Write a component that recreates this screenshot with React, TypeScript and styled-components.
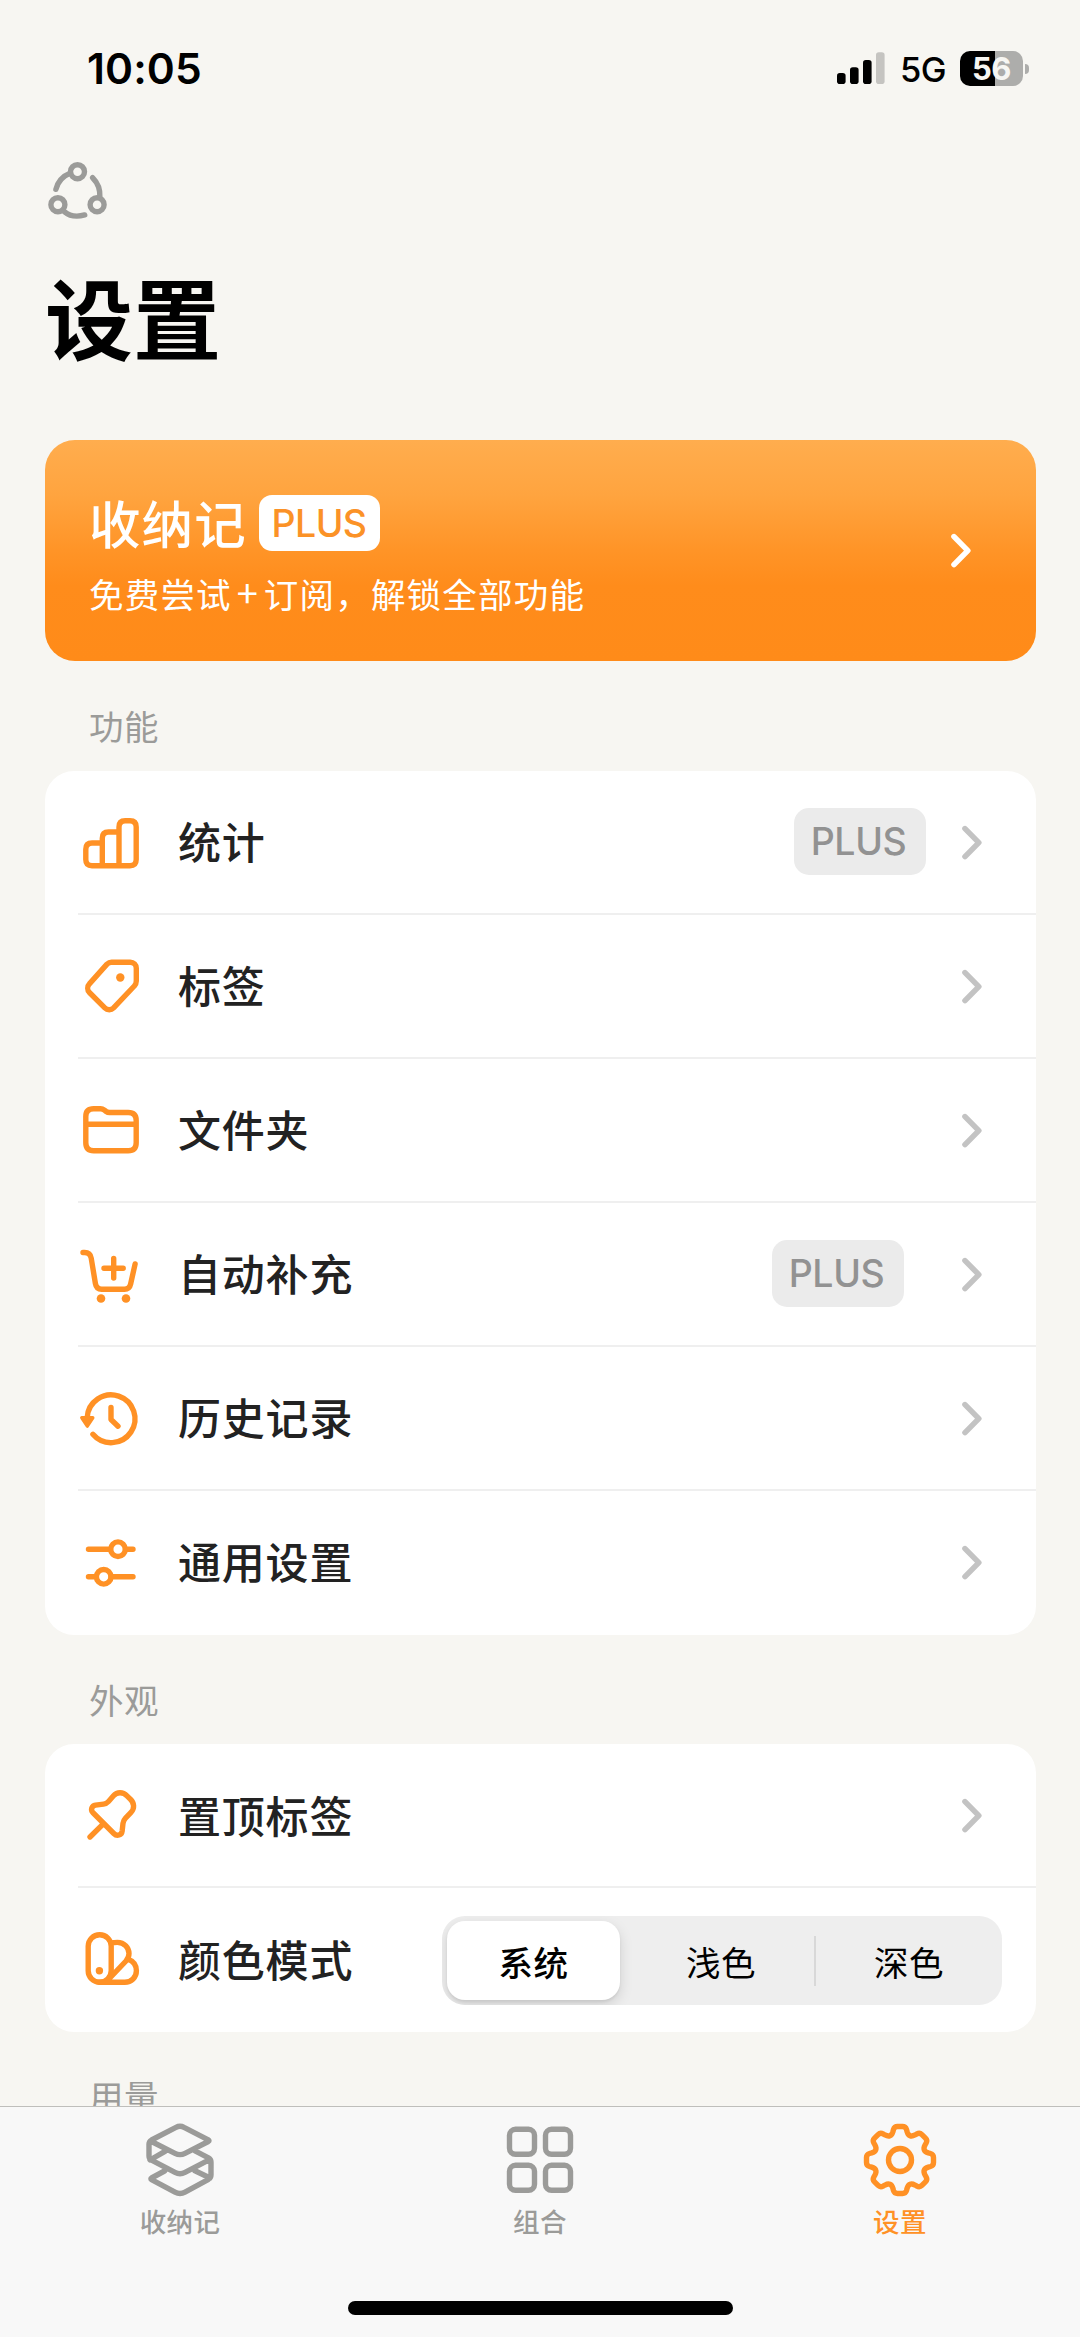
import React from "react";
import styled, { createGlobalStyle } from "styled-components";

const ORANGE = "#ff9125";
const GREY = "#9b9b99";
const CJK = `"Noto Sans CJK SC", "Noto Sans", sans-serif`;
const LATIN = `Inter, "Liberation Sans", sans-serif`;

const GlobalStyle = createGlobalStyle`
  *, *::before, *::after { box-sizing: border-box; }
  html, body { margin: 0; padding: 0; background: #f7f6f2; }
`;

const Screen = styled.div`
  width: 1080px;
  height: 2337px;
  display: flex;
  flex-direction: column;
  overflow: hidden;
  background: #f7f6f2;
  font-family: ${CJK};
  white-space: nowrap;
`;

/* ---------- status bar ---------- */

const StatusBar = styled.header`
  flex: none;
  height: 137px;
  padding: 0 51px 0 87px;
  display: flex;
  justify-content: space-between;
  font-family: ${LATIN};
  color: #000;
`;

const Clock = styled.time`
  height: 138px;
  line-height: 138px;
  font-size: 42.5px;
  font-weight: 600;
  letter-spacing: 0.1px;
`;

const StatusRight = styled.div`
  height: 137px;
  display: flex;
  align-items: center;
`;

const Network = styled.span`
  margin: 3px 14px 0 15px;
  width: 46px;
  font-size: 34.5px;
  line-height: 40px;
  font-weight: 500;
  letter-spacing: -0.6px;
`;

const Battery = styled.div`
  width: 63px;
  height: 35px;
  border-radius: 10px;
  display: flex;
  align-items: center;
  justify-content: center;
  background: linear-gradient(90deg, #000 0 35px, #adadab 35px);
  color: #f7f6f2;
  font-size: 31px;
  line-height: 35px;
  font-weight: 700;
  letter-spacing: -0.4px;
`;

const BatteryTip = styled.div`
  width: 4px;
  height: 10px;
  margin-left: 2px;
  border-radius: 0 5px 5px 0;
  background: #adadab;
`;

/* ---------- page ---------- */

const Content = styled.main`
  flex: 1;
  min-height: 0;
  overflow: hidden;
  padding: 0 44px 0 45px;
`;

const ShareButton = styled.div`
  height: 108px;
  padding-top: 22px;
  & > svg { display: block; }
`;

const Title = styled.h1`
  margin: 0;
  height: 195px;
  padding-top: 20px;
  font-size: 88px;
  line-height: 100px;
  font-weight: 700;
  color: #000;
`;

const Promo = styled.section`
  height: 221px;
  border-radius: 30px;
  padding: 51px 64px 0 44px;
  display: flex;
  justify-content: space-between;
  color: #fff;
  background: linear-gradient(180deg, #ffad4e 0%, #ffa43f 25%, #ff9427 50%, #ff8c1b 66%, #ff8b19 100%);
  & > svg { margin-top: 41px; }
`;

const PromoHead = styled.div`
  display: flex;
  align-items: center;
  height: 64px;
`;

const PromoName = styled.span`
  margin-top: -3px;
  font-size: 51.5px;
  line-height: 64px;
  font-weight: 500;
  letter-spacing: 1.1px;
  width: 170px;
`;

const PromoBadge = styled.span`
  width: 121px;
  height: 56px;
  border-radius: 13px;
  background: #fff;
  color: #fb9227;
  font: 500 37.5px/57px ${LATIN};
  text-align: center;
  letter-spacing: -0.6px;
  padding-right: 1px;
`;

const PromoText = styled.p`
  margin: 16px 0 0;
  font-size: 34.5px;
  line-height: 44px;
  font-weight: 400;
  letter-spacing: 1.2px;
`;

const PlusSign = styled.span`
  display: inline-block;
  width: 32px;
  text-align: center;
  font-size: 38px;
  line-height: 40px;
`;

const SectionLabel = styled.h2<{ $offset?: number }>`
  margin: 0;
  height: 109.5px;
  padding: ${(p) => p.$offset ?? 39}px 0 0 44px;
  font-size: 34.5px;
  line-height: 50px;
  font-weight: 400;
  letter-spacing: 0.6px;
  color: ${GREY};
`;

const Group = styled.section`
  border-radius: 29px;
  background: #fff;
  overflow: hidden;
`;

const Row = styled.div`
  height: 144px;
  margin-left: 33px;
  display: flex;
  align-items: center;
  padding-right: 53px;
  border-bottom: 2px solid #efefef;
  &:last-child { border-bottom-color: transparent; }
`;

const RowLabel = styled.span`
  margin: -3px 0 0 34px;
  flex: 1;
  font-size: 43px;
  line-height: 60px;
  font-weight: 500;
  letter-spacing: 0.8px;
  color: #222;
`;

const PlusBadge = styled.span<{ $gap: number }>`
  width: 132px;
  height: 67px;
  margin-right: ${(p) => p.$gap}px;
  border-radius: 15px;
  background: #ebebeb;
  color: #929292;
  font: 500 37.5px/67px ${LATIN};
  text-align: center;
  letter-spacing: -0.4px;
  padding-right: 3px;
`;

const Segmented = styled.div`
  width: 560px;
  height: 89px;
  margin: 3px -19px 0 0;
  padding: 5px;
  border-radius: 23px;
  background: #eeeeee;
  display: grid;
  grid-template-columns: 173px 196px 1fr;
  align-items: center;
  overflow: hidden;
`;

const Segment = styled.button<{ $on?: boolean; $line?: boolean }>`
  height: ${(p) => (p.$on ? "79px" : "50px")};
  border: 0;
  border-right: ${(p) => (p.$line ? "2px solid #d8d8d8" : "0")};
  padding: ${(p) => (p.$line ? "0 0 0 8px" : p.$on ? "0" : "0 0 0 5px")};
  border-radius: ${(p) => (p.$on ? "18px" : "0")};
  background: ${(p) => (p.$on ? "#fff" : "transparent")};
  box-shadow: ${(p) => (p.$on ? "0 5px 14px rgba(0,0,0,.13), 0 2px 3px rgba(0,0,0,.07)" : "none")};
  font-family: ${CJK};
  font-size: 34.5px;
  line-height: 50px;
  font-weight: ${(p) => (p.$on ? 500 : 400)};
  letter-spacing: 0.4px;
  color: #000;
`;

/* ---------- tab bar ---------- */

const TabBar = styled.nav`
  flex: none;
  height: 231px;
  border-top: 1.5px solid #bebebb;
  background: #f8f8f8;
  display: flex;
  flex-direction: column;
  align-items: center;
`;

const Tabs = styled.div`
  width: 100%;
  height: 194px;
  padding-top: 13px;
  display: grid;
  grid-template-columns: repeat(3, 1fr);
`;

const Tab = styled.div<{ $active?: boolean }>`
  display: flex;
  flex-direction: column;
  align-items: center;
  color: ${(p) => (p.$active ? ORANGE : GREY)};
`;

const TabLabel = styled.span`
  margin-top: 1px;
  font-size: 26.5px;
  line-height: 40px;
  font-weight: 500;
  letter-spacing: 0.4px;
`;

const HomeIndicator = styled.div`
  width: 385px;
  height: 14px;
  border-radius: 7px;
  background: #000;
`;

/* ---------- icons ---------- */

const Glyph = styled.svg`
  flex: none;
  fill: none;
  stroke: ${ORANGE};
  stroke-width: 5.4;
  stroke-linecap: round;
  stroke-linejoin: round;
`;

const TabGlyph = styled(Glyph)`
  stroke: currentColor;
`;

const RowIcon = ({ children }: { children: React.ReactNode }) => (
  <Glyph width="66" height="64" viewBox="-1 -0.5 66 64">{children}</Glyph>
);

const Dot = (p: { cx: number; cy: number; r: number }) => <circle {...p} fill={ORANGE} stroke="none" />;

const Chevron = ({ color }: { color: string }) => (
  <Glyph width="22" height="36" viewBox="0 -1 22 36" style={{ stroke: color }}>
    <path d="M4 3.6 17.8 17.6 4 31.6" strokeWidth="5.6" />
  </Glyph>
);

const Signal = () => (
  <svg width="48" height="36" viewBox="0 0 48 36">
    <rect x="0" y="22" width="8.6" height="11" rx="2.8" />
    <rect x="13" y="16.3" width="8.6" height="16.7" rx="2.8" />
    <rect x="26" y="9" width="8.6" height="24" rx="2.8" />
    <rect x="39" y="1.3" width="8.6" height="31.7" rx="2.8" fill="#c5c4c1" />
  </svg>
);

const Share = () => (
  <Glyph width="64" height="64" viewBox="0 0 64 64" style={{ stroke: GREY }}>
    <circle cx="32.5" cy="12.7" r="7" />
    <circle cx="12.9" cy="45.7" r="7" />
    <circle cx="52.1" cy="45.7" r="7" />
    <path d="M25.5 13.9C18.5 16.7 12.9 22 10.9 30.3M47.6 18.7C53 24 55.4 30.5 54.9 38.7M19.3 52.6C24.5 57 32.5 58 39.7 55.9" />
  </Glyph>
);

const icons = {
  stats: (
    <path d="M23.3 32.5H13q-6.2 0-6.2 6.2V49q0 6.2 6.2 6.2H51q6.2 0 6.2-6.2V16.4q0-6.2-6.2-6.2h-4.8q-6.2 0-6.2 6.2V55.2M40 21.5H29.5q-6.2 0-6.2 6.2V55.2" />
  ),
  tag: (
    <>
      <path d="M32.5 7.7H51.3a6 6 0 0 1 6 6V26.5q0 3-2 5L34.6 53.4a6.2 6.2 0 0 1-8.8 0L10.4 38a6.3 6.3 0 0 1 0-8.6L28 9.6q2-1.9 4.5-1.9z" />
      <Dot cx={41.3} cy={23} r={4.2} />
    </>
  ),
  folder: (
    <path d="M6.8 18q0-7.8 7.8-7.8h7q2 0 3.8 1.4l1.8 1.4q1.4 1 3.3 1H49.2q8 0 8 8V44.2q0 8-8 8H14.8q-8 0-8-8zM6.8 25.7H57.2" />
  ),
  cart: (
    <>
      <path d="M4 10h1.6q5.6 0 6.6 5.6L16.4 41q.9 5.7 6.3 5.7H45.5q5 0 6.1-5L56.1 21.5M34.7 16V35.5M25 25.7H44.2" />
      <Dot cx={22} cy={56} r={4.3} />
      <Dot cx={47} cy={56} r={4.3} />
    </>
  ),
  history: (
    <>
      <path d="M8.2 31A23.9 23.9 0 1 1 13.9 47.8M32 21V33L39 39.7" />
      <path d="M2.8 31.2H13.8L8.3 39.6z" fill={ORANGE} strokeWidth="3.4" />
    </>
  ),
  sliders: (
    <>
      <path d="M9.5 18.7H31.5M46.5 18.7H54M9.5 46.3H17M32 46.3H54" />
      <circle cx="39" cy="18.7" r="7.3" />
      <circle cx="24.7" cy="46.3" r="7.3" />
    </>
  ),
  pin: (
    <path d="M13.8 29C11.5 26.5 12.5 22.3 16.5 21.6L24.5 20.6Q27.5 20.2 29.5 18L34.5 12.3C38 8.3 44 8.3 48 12.3L51 15.3C55.5 19.5 55.8 25 51.8 29.2L46.5 34.6Q44.4 36.8 44 39.8L43.2 47.3C42.6 51.8 38 53.2 34.8 50ZM24.3 40.3 11 53.5" />
  ),
  swatch: (
    <>
      <rect x="9.2" y="7.2" width="23" height="47.6" rx="11.5" />
      <path d="M32.2 15.5Q35 14.9 38.3 14.9C45.5 14.9 50 20.4 50 26Q50 30 47 33.5L28 53.5M49.3 31.7C54.5 33.7 57.4 38 57.4 43.2C57.4 49.8 52.3 54.8 45.8 54.8H20.7" />
      <Dot cx={20.4} cy={43.3} r={3.7} />
    </>
  ),
};

const StackIcon = () => (
  <TabGlyph width="72" height="80" viewBox="0 0 72 80">
    <path d="M32 7.4Q36 5.2 40 7.4L64.3 19.8Q65.7 20.7 64.3 21.5L41 33.4Q36 35.9 31 33.4L6.5 21M32 7.4 7.5 20Q5 21.4 5 24V36Q5 38.8 7.5 40.2L31 52.4Q36 55 41 52.4L66 39.4M6 40 21 31.3M51 30.8 64.5 37.8Q67 39.2 67 42V55Q67 57.8 64.5 59.3L41 72.2Q36 75 31 72.2L7.5 59.6Q6.3 58.7 7.5 58L20.5 51M51 50.8 66 58" />
  </TabGlyph>
);

const GridIcon = () => (
  <TabGlyph width="72" height="80" viewBox="0 0 72 80">
    {[[5.5, 9.3], [41.5, 9.3], [5.5, 45.3], [41.5, 45.3]].map(([x, y]) => (
      <rect key={`${x}-${y}`} x={x} y={y} width="25" height="25" rx="6" />
    ))}
  </TabGlyph>
);

/* One tooth, from its tip through the valley that follows, repeated around the hub. */
const gearPath = () => {
  const tooth: [string, number[][]][] = [
    ["L", [[2.5, -33.5]]],
    ["Q", [[5.6, -33.5], [6.5, -30.5]]],
    ["L", [[7.1, -28.3]]],
    ["Q", [[8.08, -25.1], [10.06, -24.3]]],
    ["Q", [[12.03, -23.46], [15, -25.03]]],
    ["L", [[16.97, -26.16]]],
    ["Q", [[19.73, -27.65], [21.92, -25.46]]],
  ];
  let d = "M-2.5 -33.5";
  for (let i = 0; i < 8; i++) {
    const a = (i * Math.PI) / 4;
    tooth.forEach(([cmd, pts]) => {
      d += cmd + pts.map(([x, y]) =>
        `${(x * Math.cos(a) - y * Math.sin(a)).toFixed(2)} ${(x * Math.sin(a) + y * Math.cos(a)).toFixed(2)}`
      ).join(" ");
    });
  }
  return d + "Z";
};

const GearIcon = () => (
  <TabGlyph width="78" height="80" viewBox="-39 -40 78 80">
    <path d={gearPath()} />
    <circle r="11.5" />
  </TabGlyph>
);

/* ---------- screen ---------- */

type Item = { icon: keyof typeof icons; label: string; plusGap?: number };

const features: Item[] = [
  { icon: "stats", label: "统计", plusGap: 35 },
  { icon: "tag", label: "标签" },
  { icon: "folder", label: "文件夹" },
  { icon: "cart", label: "自动补充", plusGap: 57 },
  { icon: "history", label: "历史记录" },
  { icon: "sliders", label: "通用设置" },
];

const SettingRow = ({ item, children }: { item: Item; children?: React.ReactNode }) => (
  <Row>
    <RowIcon>{icons[item.icon]}</RowIcon>
    <RowLabel>{item.label}</RowLabel>
    {item.plusGap && <PlusBadge $gap={item.plusGap}>PLUS</PlusBadge>}
    {children ?? <Chevron color="#c3c3c3" />}
  </Row>
);

export default function App() {
  return (
    <Screen>
      <GlobalStyle />
      <StatusBar>
        <Clock>10:05</Clock>
        <StatusRight>
          <Signal />
          <Network>5G</Network>
          <Battery>56</Battery>
          <BatteryTip />
        </StatusRight>
      </StatusBar>
      <Content>
        <ShareButton><Share /></ShareButton>
        <Title>设置</Title>
        <Promo>
          <div>
            <PromoHead>
              <PromoName>收纳记</PromoName>
              <PromoBadge>PLUS</PromoBadge>
            </PromoHead>
            <PromoText>免费尝试<PlusSign>+</PlusSign>订阅，解锁全部功能</PromoText>
          </div>
          <Chevron color="#fff" />
        </Promo>
        <SectionLabel>功能</SectionLabel>
        <Group>
          {features.map((item) => <SettingRow key={item.label} item={item} />)}
        </Group>
        <SectionLabel>外观</SectionLabel>
        <Group>
          <SettingRow item={{ icon: "pin", label: "置顶标签" }} />
          <SettingRow item={{ icon: "swatch", label: "颜色模式" }}>
            <Segmented>
              <Segment $on>系统</Segment>
              <Segment $line>浅色</Segment>
              <Segment>深色</Segment>
            </Segmented>
          </SettingRow>
        </Group>
        <SectionLabel $offset={38}>用量</SectionLabel>
      </Content>
      <TabBar>
        <Tabs>
          <Tab><StackIcon /><TabLabel>收纳记</TabLabel></Tab>
          <Tab><GridIcon /><TabLabel>组合</TabLabel></Tab>
          <Tab $active><GearIcon /><TabLabel>设置</TabLabel></Tab>
        </Tabs>
        <HomeIndicator />
      </TabBar>
    </Screen>
  );
}
